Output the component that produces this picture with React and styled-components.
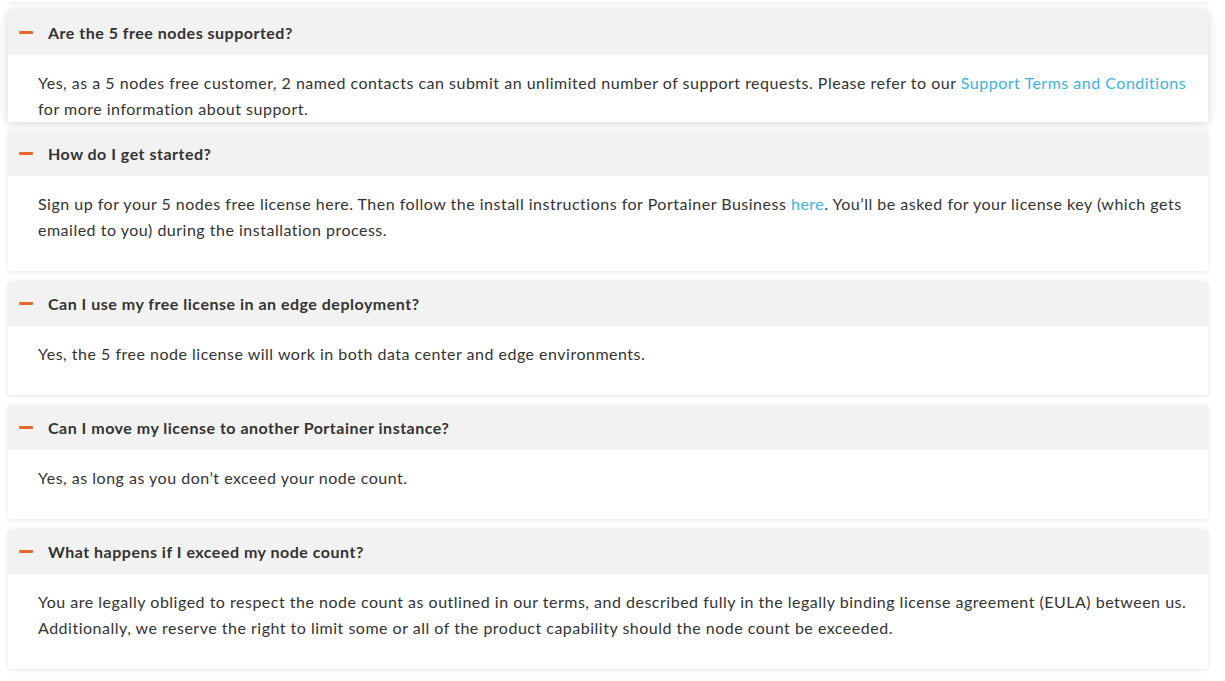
import React from "react";
import styled, { createGlobalStyle } from "styled-components";

const GlobalStyle = createGlobalStyle`
  html, body {
    margin: 0;
    padding: 0;
    background: #ffffff;
  }
  body {
    font-family: "Lato", "Open Sans", sans-serif;
    color: #333333;
  }
`;

const Wrapper = styled.div`
  display: flex;
  flex-direction: column;
  gap: 10px;
  width: 1200px;
  padding: 0 8px 12px;
`;

const ClippedCard = styled.div`
  height: 2px;
  margin-bottom: -2px;
  background: #ffffff;
  box-shadow: 0 1px 4px rgba(0, 0, 0, 0.12);
`;

const Card = styled.div`
  background: #ffffff;
  box-shadow: ${(p) =>
    p.$active
      ? "0 2px 10px rgba(0, 0, 0, 0.16)"
      : "0 1px 4px rgba(0, 0, 0, 0.1)"};
  margin-bottom: ${(p) => (p.$active ? "-1px" : "0")};
`;

const Header = styled.div`
  display: flex;
  align-items: center;
  height: 45px;
  padding: 0 0 1px 11px;
  box-sizing: border-box;
  background: #f2f2f2;
`;

const Minus = styled.span`
  display: block;
  width: 14px;
  height: 3px;
  border-radius: 1px;
  background: #e8672f;
  margin-right: 15px;
`;

const Question = styled.h3`
  margin: 0;
  font-size: 16px;
  font-weight: 700;
  letter-spacing: 0.5px;
  color: #333333;
`;

const Answer = styled.div`
  padding: 15px 12px ${(p) => (p.$active ? "0" : "28px")} 30px;
  font-size: 16px;
  line-height: 26px;
  letter-spacing: 0.5px;
  color: #333333;
`;

const Link = styled.a`
  color: #3bb4e3;
  text-decoration: none;
`;

const faqs = [
  {
    q: "Are the 5 free nodes supported?",
    a: (
      <>
        Yes, as a 5 nodes free customer, 2 named contacts can submit an unlimited number of support requests. Please refer to our{" "}
        <Link href="#">Support Terms and Conditions</Link> for more information about support.
      </>
    ),
    active: true,
  },
  {
    q: "How do I get started?",
    a: (
      <>
        Sign up for your 5 nodes free license here. Then follow the install instructions for Portainer Business{" "}
        <Link href="#">here</Link>. You’ll be asked for your license key (which gets emailed to you) during the installation process.
      </>
    ),
  },
  {
    q: "Can I use my free license in an edge deployment?",
    a: "Yes, the 5 free node license will work in both data center and edge environments.",
  },
  {
    q: "Can I move my license to another Portainer instance?",
    a: "Yes, as long as you don’t exceed your node count.",
  },
  {
    q: "What happens if I exceed my node count?",
    a: "You are legally obliged to respect the node count as outlined in our terms, and described fully in the legally binding license agreement (EULA) between us. Additionally, we reserve the right to limit some or all of the product capability should the node count be exceeded.",
  },
];

function App() {
  return (
    <>
      <GlobalStyle />
      <Wrapper>
        <ClippedCard />
        {faqs.map((item) => (
          <Card key={item.q} $active={item.active}>
            <Header>
              <Minus />
              <Question>{item.q}</Question>
            </Header>
            <Answer $active={item.active}>{item.a}</Answer>
          </Card>
        ))}
      </Wrapper>
    </>
  );
}

export default App;
